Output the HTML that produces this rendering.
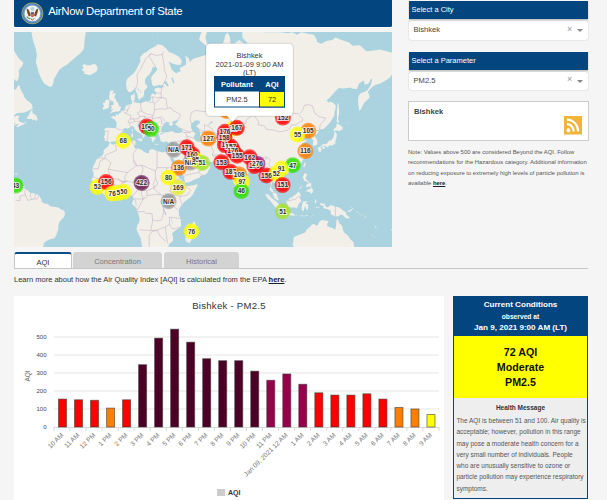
<!DOCTYPE html>
<html><head><meta charset="utf-8">
<style>
*{box-sizing:border-box;margin:0;padding:0}
html,body{width:607px;height:500px;overflow:hidden;background:#f5f5f5;font-family:"Liberation Sans",sans-serif;color:#333}
.abs{position:absolute}
#hdr{left:14px;top:0;width:378px;height:26.5px;background:#03467f;border-radius:0 0 1.5px 1.5px;box-shadow:0 1px 0 #fff}
#hdr .t{position:absolute;left:34.3px;top:5.3px;color:#fff;font-size:11.4px;letter-spacing:-0.3px;white-space:nowrap}
#map{left:14px;top:32px;width:378px;height:215px;background:#aad3df;overflow:hidden}
.ph{left:409px;width:179px;height:18px;background:#03467f;color:#fff;font-size:7.5px;padding:3.5px 0 0 2.5px;white-space:nowrap;box-shadow:0 1px 1.5px rgba(0,0,0,.25)}
.sel{left:409px;width:179px;height:18.5px;background:#fff;border-radius:2px;box-shadow:0 0 1.2px rgba(0,0,0,.35);font-size:7.6px;color:#444;padding:4px 0 0 4.5px}
.sel .x{position:absolute;left:158px;top:2.5px;font-size:9px;color:#999}
.sel .c{position:absolute;left:168px;top:8px;width:0;height:0;border-left:3px solid transparent;border-right:3px solid transparent;border-top:3px solid #888}
#rss{left:408px;top:101px;width:181px;height:40px;background:#fff;border:1px solid #ccc}
#rss .n{position:absolute;left:5px;top:5px;font-size:7.6px;font-weight:bold;color:#444}
#note{left:408px;top:147px;width:190px;white-space:nowrap;font-size:5.9px;line-height:10.3px;color:#555}
.tab{top:252px;height:16px;background:#d3d3d3;font-size:7.5px;color:#777;text-align:center;padding-top:4.5px;border-radius:3px 3px 0 0}
#learn{left:14px;top:274.5px;font-size:7.5px;color:#333;white-space:nowrap}
#chart{left:14px;top:296px;width:430px;height:204px;background:#fff}
#cc{left:453px;top:296px;width:135px;height:203px;border:1px solid #03467f;background:#eee}
</style></head><body>
<div id="hdr" class="abs">
 <svg class="abs" style="left:7px;top:1.5px" width="23" height="23" viewBox="0 0 23 23">
  <circle cx="11.4" cy="11.4" r="10.9" fill="#a9a86a"/>
  <circle cx="11.4" cy="11.4" r="10.1" fill="#4a7fb8"/>
  <circle cx="11.4" cy="11.4" r="9.2" fill="#6d98c8"/>
  <circle cx="11.4" cy="11.4" r="7.9" fill="#f2f2ee"/>
  <circle cx="11.4" cy="7" r="2.1" fill="#b5d3e3"/>
  <path d="M5.5 6.5 Q6 11 7.8 14.5 L9.8 13.5 Q9 10 7.5 7.5Z M17.3 6.5 Q16.8 11 15 14.5 L13 13.5 Q13.8 10 15.3 7.5Z" fill="#6e4c22"/>
  <path d="M9.9 10.3 H12.9 V14.2 Q11.4 16.5 9.9 14.2Z" fill="#d06060"/>
  <rect x="9.9" y="10.3" width="3" height="1.4" fill="#3a5a9a"/>
  <path d="M5.8 14.5 Q7 16.5 9 16.8" stroke="#5a8a4a" stroke-width="1.1" fill="none"/>
  <path d="M9.5 16.5 L11.4 18 L13.3 16.5" stroke="#6e4c22" stroke-width="0.9" fill="none"/>
 </svg>
 <div class="t">AirNow Department of State</div>
</div>
<div id="map" class="abs"><svg class="abs" style="left:0;top:0" width="378" height="215" viewBox="0 0 378 215">
<path d="M95.5 111.3L94.0 114.7L92.8 115.5L90.1 117.8L89.4 119.3L89.7 121.3L88.3 123.7L84.6 125.5L82.1 128.1L80.8 131.5L80.0 132.8L78.4 136.5L78.1 137.5L79.2 139.8L79.8 142.1L79.2 144.7L77.5 147.5L78.9 149.6L78.8 151.3L80.4 152.0L81.5 153.7L83.4 155.7L84.1 157.3L85.2 158.8L87.8 160.7L90.1 162.4L92.6 163.6L96.0 162.7L98.3 162.2L101.4 162.9L104.1 161.8L106.3 161.0L109.7 160.5L111.8 161.2L113.7 163.8L116.0 163.5L117.2 163.2L119.2 164.5L119.5 167.0L119.1 168.9L118.9 169.8L117.8 171.3L119.8 174.1L121.7 176.3L122.6 177.8L123.4 179.6L124.3 182.0L124.8 184.0L125.7 187.1L125.1 189.9L123.1 194.1L122.5 197.4L124.5 201.8L126.8 206.6L127.4 211.0L127.7 212.9L129.8 217.1L132.9 226.1L135.2 229.8L150.6 229.8L152.1 218.6L154.1 216.2L155.1 211.9L158.6 209.3L159.1 208.3L159.1 205.1L158.3 202.6L158.0 201.5L160.3 199.4L161.2 198.4L165.8 195.7L167.1 193.7L166.9 190.6L166.8 187.0L165.1 183.5L164.9 180.9L164.5 178.4L165.5 176.6L166.9 174.2L168.9 171.9L170.6 169.6L174.1 167.3L177.5 164.2L179.1 162.2L181.1 158.1L183.2 154.2L183.4 152.1L180.6 152.9L173.7 154.3L171.4 153.2L170.8 152.4L171.1 150.9L170.1 150.2L167.5 147.8L165.1 146.1L163.8 143.0L162.1 141.4L161.7 139.6L161.1 135.7L159.1 132.5L157.7 129.8L156.5 126.9L155.4 124.6L154.5 122.0L154.9 123.7L157.2 125.7L158.3 122.9L158.6 125.5L159.4 126.7L161.1 129.8L162.9 132.2L164.8 136.5L167.2 140.6L169.8 144.0L170.5 147.4L171.0 149.7L171.4 150.7L173.7 150.5L177.5 149.3L180.0 147.8L184.8 146.1L187.7 143.8L191.2 142.4L193.4 140.8L194.6 138.2L196.5 134.9L194.6 133.0L191.7 131.7L191.2 128.3L190.6 129.6L189.5 130.1L187.5 132.0L185.2 132.3L183.7 131.3L183.8 129.1L183.2 128.8L182.6 131.3L181.4 129.3L180.8 127.4L179.5 126.2L178.3 123.0L179.2 122.2L180.6 121.4L182.3 123.4L183.5 125.5L186.8 127.6L189.8 127.2L191.1 126.9L192.5 128.1L193.4 129.6L196.0 130.0L197.7 130.1L200.3 130.5L203.7 130.1L206.8 130.0L207.5 131.0L208.5 132.7L210.0 134.4L212.2 134.9L211.4 137.3L212.9 137.7L216.0 136.5L216.2 135.4L216.3 137.2L216.5 140.6L217.2 143.8L218.0 146.3L219.5 150.4L221.1 153.4L221.7 155.1L223.7 157.9L224.8 156.8L226.0 155.7L227.2 154.5L227.2 152.6L228.0 150.1L227.7 148.0L228.9 145.8L229.5 145.1L231.1 143.8L232.6 142.7L234.3 141.1L236.5 139.3L238.2 137.7L239.8 136.3L242.2 135.7L243.8 135.4L245.1 134.4L245.7 135.2L246.0 136.7L247.4 138.8L248.8 140.6L249.8 143.0L250.0 145.5L251.1 145.6L252.6 144.7L254.2 144.0L254.8 145.5L255.5 148.5L256.5 151.8L256.0 154.9L255.7 158.1L258.5 160.4L258.8 162.1L260.3 165.8L261.7 167.0L263.7 168.2L264.8 168.4L264.2 166.6L263.4 164.5L262.8 161.9L261.8 161.0L259.2 159.3L258.6 157.3L257.2 156.2L257.1 154.2L258.2 151.0L258.3 149.6L259.2 149.4L259.7 150.4L260.6 150.9L262.2 151.5L262.9 153.1L263.7 154.2L265.1 154.3L265.7 156.0L265.7 157.1L267.2 155.7L268.6 154.9L269.2 154.3L271.4 153.4L272.2 152.6L272.5 151.5L272.5 149.0L272.0 146.6L270.9 145.3L270.0 144.7L268.2 142.9L267.1 141.1L267.2 139.6L268.3 138.5L269.5 137.3L271.1 136.5L272.3 136.5L273.2 137.3L274.0 138.5L274.3 137.0L276.0 136.5L277.5 136.0L280.2 135.2L282.2 134.4L284.0 133.4L286.2 131.5L288.0 130.1L288.5 128.8L289.4 127.2L290.5 125.5L291.7 123.7L292.0 122.2L291.4 120.5L292.0 119.8L290.6 118.4L290.3 117.5L289.5 115.6L288.2 113.4L288.5 111.9L289.7 110.8L291.9 109.2L293.1 108.3L291.2 108.1L288.8 108.7L287.5 108.3L286.0 106.5L285.5 105.1L286.8 104.1L288.5 103.3L290.0 101.9L291.4 101.3L292.5 102.7L291.5 104.5L291.1 105.3L292.9 104.1L295.9 103.3L296.6 103.9L296.9 105.7L298.6 107.7L299.2 108.1L299.1 110.2L298.8 112.8L299.4 114.0L300.9 113.4L302.9 112.7L303.5 111.0L303.1 108.1L301.9 105.9L300.6 104.7L300.8 103.3L303.5 101.7L304.2 99.5L305.4 98.2L307.4 96.8L308.9 97.4L310.6 96.3L313.1 93.8L316.0 90.5L318.0 87.6L320.3 83.7L320.6 80.1L321.4 76.9L321.7 74.1L321.4 73.1L320.3 72.1L318.6 70.5L316.0 69.7L314.9 70.8L312.6 68.6L316.9 64.5L320.9 59.7L324.8 56.1L329.1 56.4L333.5 56.1L336.5 55.5L338.8 56.7L342.9 57.0L345.2 51.2L349.9 48.6L350.6 52.4L354.2 52.1L356.8 47.3L358.3 46.6L356.8 52.7L355.7 54.9L352.9 58.8L346.0 61.7L344.5 64.5L343.9 68.6L344.6 74.4L345.4 78.9L346.8 77.6L348.5 73.9L350.6 70.2L353.4 67.8L355.7 65.4L354.9 61.7L353.7 60.3L355.7 57.3L359.1 54.3L361.4 53.1L366.8 51.2L370.6 48.9L375.2 46.3L379.6 40.5L377.6 38.7L381.4 37.6L381.4 21.8L389.1 17.4L389.1 -44.4L142.9 -44.4L144.1 12.3L140.6 14.7L135.2 17.4L133.5 19.2L129.1 21.8L126.0 25.2L126.6 28.8L124.1 33.9L122.3 37.6L119.1 41.9L116.8 43.6L113.8 46.3L112.1 49.6L112.1 53.1L112.8 56.4L113.1 57.6L114.5 59.7L115.2 60.3L117.5 59.7L119.1 57.9L120.3 57.3L120.9 54.6L121.5 56.7L121.7 59.1L122.8 61.1L123.8 64.0L124.0 65.9L124.5 67.6L126.3 67.6L126.6 65.9L128.5 65.4L129.7 64.0L130.0 61.4L130.3 58.8L132.3 56.4L133.7 54.6L131.4 52.1L130.9 49.6L131.4 46.6L133.1 44.6L135.7 41.9L137.2 39.4L138.5 35.4L141.7 34.6L143.5 37.6L141.1 40.5L137.7 44.3L137.1 47.0L137.7 49.6L138.3 52.9L139.5 54.3L142.8 53.7L145.2 52.7L148.6 53.7L150.9 54.6L148.3 55.2L147.5 56.1L143.7 55.8L142.5 56.1L140.6 56.7L140.6 58.2L140.9 59.4L141.8 59.4L142.0 62.3L141.4 63.1L139.2 61.4L137.7 61.7L136.8 64.5L136.9 66.7L136.8 68.1L135.2 68.9L133.2 70.2L132.6 69.2L130.3 69.7L128.5 70.8L126.5 71.6L124.3 70.8L123.1 71.0L121.4 70.2L120.0 70.5L119.8 69.2L120.8 67.3L120.3 65.4L121.2 64.5L120.5 63.1L120.8 61.1L118.9 62.9L117.7 62.9L116.9 64.5L116.9 67.3L117.7 68.6L118.0 71.3L116.9 72.6L115.4 72.3L114.5 72.9L112.6 73.4L111.8 74.0L111.4 75.4L111.1 76.2L110.6 76.7L109.8 77.9L108.3 78.6L107.3 79.0L106.8 80.8L105.2 81.5L104.6 82.5L103.2 83.0L102.4 82.0L101.5 82.3L102.1 84.4L101.4 84.6L99.8 84.1L98.0 84.4L97.1 85.1L97.5 86.0L98.8 86.4L100.6 87.6L101.4 88.9L102.7 90.2L102.6 91.6L102.6 93.8L102.1 95.9L100.1 96.1L98.6 96.0L95.7 95.8L92.9 95.7L91.5 96.2L90.1 97.2L90.9 98.6L91.1 100.8L90.8 103.1L89.8 105.7L90.9 106.3L90.8 109.0L92.3 109.0L93.7 108.7L94.8 110.0L96.0 110.8Z" fill="#f2efe9"/>
<path d="M12.1 -14.5L17.5 0.2L18.1 3.9L19.4 9.9L21.1 14.7L22.1 18.3L22.9 23.1L21.8 30.4L23.5 35.4L24.6 40.5L26.3 44.6L28.0 47.9L30.3 51.8L34.4 54.0L36.9 54.9L38.3 53.4L39.2 51.2L39.8 47.3L42.4 42.9L45.1 38.3L48.1 35.4L52.9 32.7L57.5 28.8L62.1 24.8L65.2 22.2L68.3 19.2L69.8 16.5L70.3 13.7L70.6 7.9L71.4 1.8L75.2 -14.5Z" fill="#f2efe9"/>
<path d="M69.5 41.9L70.9 40.1L67.7 38.0L69.8 35.8L68.1 33.9L70.0 32.0L73.7 33.5L76.8 33.1L79.8 32.0L82.0 32.4L83.5 35.4L83.1 38.7L80.8 40.5L77.5 42.6L75.2 43.2L72.1 41.9Z" fill="#f2efe9"/>
<path d="M-18.6 -14.5L-14.0 0.2L-10.2 4.9L-5.6 10.4L-0.9 15.1L0.4 19.2L2.9 23.5L5.2 26.8L9.4 30.8L8.3 33.9L6.0 36.5L4.7 39.4L5.2 42.6L4.7 45.0L4.4 47.0L3.5 48.6L2.1 49.2L0.6 47.3L-2.5 46.6L-6.3 47.9L-18.6 47.9Z" fill="#f2efe9"/>
<path d="M5.1 53.1L6.4 56.7L7.8 59.7L9.5 62.6L10.3 65.1L12.4 67.8L15.4 70.0L17.8 72.3L18.7 75.7L17.1 77.6L12.9 79.6L9.7 80.8L6.7 80.8L2.6 81.3L0.4 83.2L-1.7 84.1L-3.3 86.0L4.0 83.4L5.7 84.1L4.4 86.0L4.4 87.1L4.7 88.7L6.3 90.1L9.1 90.7L10.6 91.4L11.8 89.6L11.4 88.3L12.4 90.5L10.6 92.0L7.2 93.6L3.5 95.3L2.6 95.3L3.2 93.6L5.5 92.0L2.6 92.3L1.4 93.1L-0.9 94.2L-3.3 95.7L-10.9 103.1L-34.0 103.1L-34.0 47.9L-15.6 47.9L-4.0 49.6L-2.5 52.7L-2.0 58.2L2.1 57.3L4.0 53.7Z" fill="#f2efe9"/>
<path d="M19.1 77.4L18.1 79.4L19.1 81.5L21.1 82.5L22.1 83.4L22.9 85.1L23.5 86.9L22.8 88.9L21.4 88.3L20.0 87.6L18.4 88.5L18.0 86.9L13.2 86.9L13.4 84.8L14.9 83.2L16.1 80.1L17.7 77.9Z" fill="#f2efe9"/>
<path d="M-6.3 151.8L-0.9 154.0L2.1 154.2L4.4 154.6L6.7 154.0L9.1 153.8L8.3 154.9L10.6 156.5L12.4 157.4L14.3 158.7L15.1 159.9L16.6 161.2L19.5 161.3L21.7 161.9L24.0 162.9L25.4 164.1L26.6 166.6L27.7 167.8L27.4 169.5L29.1 170.7L30.1 171.2L31.4 171.9L32.9 171.6L34.4 172.4L36.3 174.2L39.1 174.7L42.1 174.9L45.2 176.1L47.5 177.8L50.0 178.4L50.8 180.4L50.8 182.9L49.7 185.4L47.5 187.4L45.2 190.6L44.4 193.4L44.3 197.3L43.4 199.9L42.6 202.3L41.4 204.8L39.8 206.6L37.5 206.8L34.4 208.1L32.4 209.0L29.8 211.0L29.7 213.6L26.8 218.8L-3.3 237.7L-18.6 151.8Z" fill="#f2efe9"/>
<path d="M10.6 153.7L10.7 154.8L9.2 154.9L9.4 153.8Z" fill="#f2efe9"/>
<path d="M0.9 141.4L3.5 141.6L3.4 142.4L0.9 142.2Z" fill="#f2efe9"/>
<path d="M95.7 81.1L96.4 81.3L98.1 80.5L99.8 79.9L100.7 80.0L102.1 79.5L104.2 79.4L106.5 78.6L106.6 77.9L105.7 77.6L106.5 76.7L107.1 75.2L105.8 74.0L104.9 74.4L104.8 72.6L104.3 71.0L102.8 69.7L102.3 68.6L101.5 66.7L100.4 65.9L100.4 64.5L101.4 62.7L101.7 61.1L99.5 61.4L98.3 61.4L99.8 59.0L99.2 58.4L96.8 58.5L95.5 61.1L95.5 63.1L94.9 64.8L95.5 67.8L96.8 68.6L97.8 69.2L99.1 68.9L99.4 70.5L99.8 72.9L97.4 73.1L97.1 74.4L98.0 75.7L96.4 77.2L98.3 77.4L99.5 77.6L98.0 78.4L97.1 79.9Z" fill="#f2efe9"/>
<path d="M93.1 67.6L94.9 68.1L95.8 69.7L95.1 71.3L95.1 73.0L94.7 75.9L91.7 76.9L89.4 77.8L88.4 76.2L89.5 74.9L90.1 73.4L88.8 72.6L89.1 70.8L91.2 70.5L90.9 69.6L91.7 68.1Z" fill="#f2efe9"/>
<path d="M142.9 -44.4L144.1 12.3L148.3 13.3L152.1 16.5L154.5 19.6L156.0 20.5L159.8 21.8L163.7 23.9L165.7 25.6L167.8 29.2L166.8 32.7L163.7 33.1L158.3 31.6L154.5 29.6L156.0 32.7L157.7 37.6L159.8 39.4L162.1 41.2L166.8 39.0L165.7 36.5L166.8 35.4L169.8 33.9L172.1 32.4L172.1 28.0L171.1 23.5L174.5 26.0L176.0 30.0L179.1 26.8L186.0 24.8L188.3 23.9L192.9 22.7L195.2 21.8L197.5 18.3L203.7 22.7L206.8 22.7L208.3 19.6L207.5 15.1L210.2 7.9L211.4 2.8L213.7 0.2L216.0 5.4L216.5 12.8L217.5 21.8L216.0 30.0L215.2 32.0L218.3 31.2L221.4 23.9L219.1 21.8L218.3 15.1L221.4 10.4L225.2 7.9L228.3 10.4L230.6 11.8L232.9 17.4L232.2 19.6L234.5 17.4L232.9 10.4L228.3 5.4L228.3 0.2L236.8 -1.5L250.6 0.2L266.0 0.2L273.7 1.2L278.3 0.2L282.9 2.8L287.5 0.2L293.7 1.8L299.9 2.8L302.9 7.9L302.9 9.9L307.5 11.8L312.2 8.9L318.3 7.9L321.4 5.4L327.5 7.9L335.2 10.4L338.3 13.7L346.0 13.3L352.2 19.2L358.3 18.7L366.0 17.4L373.7 19.6L381.4 21.8L396.8 21.8L396.8 -105.7L142.9 -105.7Z" fill="#aad3df"/>
<path d="M96.2 110.8L97.7 109.6L101.1 109.6L102.9 107.9L103.7 106.5L103.9 104.1L105.8 101.7L107.8 100.3L109.5 98.4L109.1 97.6L110.5 95.9L112.8 96.3L113.5 96.8L115.7 95.5L118.1 94.0L119.5 94.6L120.3 95.8L120.6 97.2L123.4 99.7L126.4 101.5L127.2 101.9L128.8 103.5L128.5 106.9L130.0 105.3L130.8 104.3L130.9 102.3L132.9 102.9L130.5 100.9L129.4 99.3L126.3 98.0L125.2 95.7L123.8 94.7L123.4 91.8L125.6 91.3L125.8 93.1L126.6 92.0L127.8 94.6L129.7 95.9L132.3 97.7L133.8 99.1L134.4 100.5L134.5 102.2L135.1 103.9L136.9 106.3L137.8 106.6L137.7 109.0L139.1 110.2L139.9 109.6L139.8 108.1L140.9 107.3L141.4 107.8L141.7 106.1L139.8 104.5L139.7 101.9L141.2 103.1L144.3 101.4L145.1 102.7L145.2 104.1L146.1 106.3L146.6 109.0L148.0 109.4L149.8 110.4L151.7 109.2L153.7 110.0L154.9 111.0L157.7 109.4L160.1 109.8L159.5 111.9L159.1 114.9L158.3 116.9L158.0 118.2L157.5 119.3L154.1 119.7L150.5 119.8L148.9 120.5L143.2 119.1L141.4 118.2L138.3 116.9L135.4 118.2L134.5 121.4L132.6 120.9L130.0 119.8L127.7 117.7L124.8 116.7L122.1 116.2L120.0 114.9L121.1 113.4L121.4 111.5L121.4 108.8L119.7 108.5L116.5 109.2L113.7 109.0L109.1 109.5L106.8 110.4L103.5 111.5L100.0 112.5L97.8 112.3L96.3 111.1Z" fill="#aad3df"/>
<path d="M145.1 102.7L146.8 101.3L148.9 101.1L149.8 101.7L147.5 102.3Z" fill="#aad3df"/>
<path d="M149.2 100.7L153.4 100.2L158.5 99.1L160.3 100.5L162.9 100.9L165.5 101.1L168.5 99.8L168.3 98.0L165.5 95.7L162.6 93.3L160.8 92.3L162.9 90.5L164.5 87.8L159.1 89.2L158.3 90.5L159.1 92.0L159.1 92.7L156.3 94.0L154.5 92.0L156.1 90.7L151.8 89.4L150.1 92.3L148.6 94.2L147.4 96.6L146.8 98.0L147.5 99.3Z" fill="#aad3df"/>
<path d="M179.1 90.5L180.6 88.7L183.7 88.3L186.0 89.4L185.7 91.6L182.1 93.8L183.2 94.9L185.4 97.2L185.7 100.1L187.2 100.1L186.0 101.9L186.0 103.1L186.8 104.7L187.5 107.1L187.4 109.4L184.5 109.8L181.4 108.5L179.7 106.3L180.1 104.1L181.2 102.3L181.8 102.1L180.3 100.5L178.8 99.1L177.5 97.0L176.8 93.8L177.5 91.6Z" fill="#aad3df"/>
<path d="M196.8 89.8L198.3 89.2L198.3 90.7L196.0 92.0L194.2 94.0L194.6 92.5Z" fill="#aad3df"/>
<path d="M217.5 90.5L219.8 88.9L223.7 89.6L226.0 88.7L226.3 90.3L221.4 90.7L219.1 91.2Z" fill="#aad3df"/>
<path d="M272.9 66.5L271.4 72.6L268.0 76.4L264.5 77.6L264.2 76.9L268.3 73.9L271.8 68.6Z" fill="#aad3df"/>
<path d="M154.5 169.9L156.8 170.6L156.0 174.2L154.5 175.0L153.4 172.7Z" fill="#aad3df"/>
<path d="M149.4 175.5L151.8 183.5L152.1 182.7L149.8 175.6Z" fill="#aad3df"/>
<path d="M156.8 185.1L158.6 192.6L158.9 192.2L157.2 185.2Z" fill="#aad3df"/>
<path d="M152.1 48.9L154.9 53.7L152.9 54.3L149.8 50.5Z" fill="#aad3df"/>
<path d="M158.3 45.0L160.6 50.5L159.1 51.2L157.5 46.3Z" fill="#aad3df"/>
<path d="M123.7 56.1L125.7 58.2L124.0 58.8Z" fill="#aad3df"/>
<path d="M126.9 57.9L126.9 60.9L126.5 60.9L126.5 57.9Z" fill="#aad3df"/>
<path d="M193.1 14.7L189.8 11.8L185.2 7.9L186.0 3.9L187.5 0.2L189.8 -5.4L194.5 -5.4L192.9 0.2L191.4 5.4L192.9 10.9L195.2 13.7Z" fill="#f2efe9"/>
<path d="M194.5 17.4L195.2 15.6L197.5 16.5L197.4 18.3Z" fill="#f2efe9"/>
<path d="M123.7 106.5L128.5 106.7L127.8 109.0L127.7 109.6L123.5 107.9Z" fill="#f2efe9"/>
<path d="M118.6 100.7L119.2 104.9L117.5 105.3L117.1 102.1Z" fill="#f2efe9"/>
<path d="M118.9 97.0L118.6 100.3L117.7 99.3L117.7 97.8Z" fill="#f2efe9"/>
<path d="M140.6 111.7L144.9 112.3L144.1 112.8L140.6 112.5Z" fill="#f2efe9"/>
<path d="M154.1 112.1L157.7 111.7L155.2 113.6L154.3 113.4Z" fill="#f2efe9"/>
<path d="M227.8 155.2L229.5 157.3L230.5 159.6L229.1 161.2L228.2 161.3L227.2 159.3L227.4 157.3Z" fill="#f2efe9"/>
<path d="M180.3 189.0L181.4 191.4L182.1 194.5L180.6 197.0L179.4 201.8L177.7 206.8L176.0 211.0L172.5 210.1L171.2 206.8L172.0 203.5L172.3 198.6L173.1 195.3L176.0 194.5L178.3 191.8Z" fill="#f2efe9"/>
<path d="M251.1 161.8L254.5 162.4L256.2 164.5L259.1 167.3L261.7 168.9L264.0 171.2L265.7 173.5L267.5 175.0L267.2 179.5L264.5 178.1L261.8 175.8L258.9 172.2L256.5 168.9L253.7 166.6L252.2 164.2Z" fill="#f2efe9"/>
<path d="M267.5 179.5L271.1 180.0L274.3 181.0L278.0 181.0L280.6 182.3L280.6 183.7L276.0 183.2L271.4 182.3L268.3 181.2L266.5 180.9Z" fill="#f2efe9"/>
<path d="M281.4 182.9L282.2 184.0L284.5 184.1L287.5 183.5L290.6 183.7L293.7 183.1L293.7 183.7L289.9 184.3L286.0 184.1L283.4 184.1Z" fill="#f2efe9"/>
<path d="M300.3 183.2L296.8 184.8L294.5 186.3L295.7 185.6L298.0 183.7Z" fill="#f2efe9"/>
<path d="M284.2 159.6L286.2 161.5L286.9 163.9L285.4 165.3L287.5 168.9L284.3 172.4L283.7 174.2L282.9 176.6L280.8 175.6L276.8 175.5L274.0 175.0L273.7 172.7L272.5 170.4L272.8 167.9L274.3 167.9L275.7 166.1L278.3 165.2L279.9 163.6L281.4 162.7L283.1 161.2Z" fill="#f2efe9"/>
<path d="M297.1 167.9L295.2 169.6L289.9 169.2L289.1 169.6L288.3 171.9L287.4 175.8L288.3 179.0L289.7 178.7L290.6 175.0L290.9 174.2L292.5 177.3L292.9 178.9L294.0 176.6L294.2 171.9L291.9 171.8L291.4 171.2L293.7 169.6L296.5 168.9Z" fill="#f2efe9"/>
<path d="M301.4 167.0L302.6 169.6L301.4 171.6L300.6 170.4Z" fill="#f2efe9"/>
<path d="M301.4 174.7L305.7 175.2L305.2 175.8L301.7 175.6Z" fill="#f2efe9"/>
<path d="M305.9 171.0L308.3 171.6L310.6 171.8L311.4 173.9L312.9 175.5L316.0 173.9L316.6 172.7L320.6 174.4L323.7 175.0L326.8 176.6L328.8 178.4L331.4 180.1L332.0 180.7L332.2 182.7L334.5 184.3L336.0 186.6L332.2 186.2L330.6 185.1L329.1 183.2L326.0 182.4L324.9 184.3L321.4 184.5L317.5 182.7L316.8 181.8L316.5 178.4L313.7 177.3L310.6 176.6L309.1 175.8L309.9 173.9L307.5 173.5L306.3 172.7Z" fill="#f2efe9"/>
<path d="M338.0 176.9L338.3 178.1L335.2 180.0L332.9 179.2L335.2 178.6Z" fill="#f2efe9"/>
<path d="M323.7 187.0L322.3 189.0L322.2 191.8L322.0 194.5L321.1 197.8L318.6 196.1L315.2 195.0L312.9 193.7L313.7 190.6L314.9 189.0L312.2 188.8L309.9 188.2L307.5 187.9L306.0 189.2L305.7 189.6L304.6 190.9L303.7 193.4L301.7 193.6L300.6 192.2L299.1 192.0L297.5 193.0L296.0 195.0L293.7 196.5L292.5 197.8L291.4 200.2L288.3 201.8L286.9 202.3L284.5 203.1L280.6 204.8L280.0 204.8L279.5 206.8L279.2 210.0L278.6 212.7L280.0 215.3L281.4 228.0L335.2 228.0L340.8 216.2L340.3 214.4L339.4 210.1L336.6 207.4L334.9 205.1L334.0 203.5L330.3 200.7L329.1 198.6L328.8 196.8L328.0 193.7L326.8 192.6L325.4 191.4L324.6 189.0Z" fill="#f2efe9"/>
<path d="M290.3 141.4L292.5 141.6L292.9 143.8L291.5 145.8L292.5 148.3L295.4 149.9L295.2 150.9L291.1 149.0L290.0 148.8L289.9 147.7L288.8 145.6L289.7 143.0Z" fill="#f2efe9"/>
<path d="M297.5 155.2L299.1 158.1L298.6 160.7L297.2 161.8L295.2 159.8L292.2 159.6L292.9 157.9L294.9 157.3L296.5 156.5Z" fill="#f2efe9"/>
<path d="M297.2 151.0L297.1 154.9L293.7 154.5L292.9 156.0L292.0 153.4L293.4 152.1L295.2 151.2Z" fill="#f2efe9"/>
<path d="M288.3 152.6L287.9 154.9L284.8 157.4L284.6 157.0L287.5 154.2Z" fill="#f2efe9"/>
<path d="M291.4 130.1L291.5 132.3L290.3 135.7L289.2 134.0L290.2 131.5Z" fill="#f2efe9"/>
<path d="M274.2 138.8L275.2 139.8L272.9 141.9L271.5 140.1Z" fill="#f2efe9"/>
<path d="M306.0 114.9L307.5 116.9L306.5 120.2L304.8 119.6L304.2 117.3L304.0 115.6Z" fill="#f2efe9"/>
<path d="M306.0 114.7L308.5 112.7L309.4 111.9L312.9 111.7L313.7 110.4L315.5 108.1L316.0 109.0L318.3 107.3L319.9 104.1L320.3 100.7L322.0 100.1L322.9 103.1L322.2 106.5L321.4 109.0L321.2 111.5L319.7 112.8L318.0 113.6L315.2 113.4L313.4 115.7L312.3 114.2L310.6 113.4L309.1 114.2L306.8 114.9Z" fill="#f2efe9"/>
<path d="M311.5 114.3L310.9 116.0L308.9 116.9L307.9 115.6L309.1 114.7Z" fill="#f2efe9"/>
<path d="M320.0 100.3L321.2 98.4L322.6 98.2L324.9 99.3L328.8 97.0L328.0 94.2L322.8 91.6L322.3 94.9L320.3 96.6L319.5 98.0Z" fill="#f2efe9"/>
<path d="M324.2 70.8L324.8 73.9L325.2 81.3L324.0 86.0L325.1 90.5L322.9 90.5L322.9 84.8L322.9 78.9L323.4 72.6Z" fill="#f2efe9"/>
<path d="M328.3 95.9L331.4 92.7L332.2 92.0L336.0 89.4L336.8 88.9L335.9 89.8L331.1 93.1L328.6 96.1Z" fill="#f2efe9"/>
<path d="M336.2 174.2L337.5 175.0L339.7 177.0L339.2 177.5L337.5 175.6L336.0 174.6Z" fill="#f2efe9"/>
<path d="M342.3 178.7L344.2 180.4L343.9 181.0L342.3 179.3Z" fill="#f2efe9"/>
<path d="M350.0 184.8L351.9 185.1L351.4 185.7L350.2 185.2Z" fill="#f2efe9"/>
<path d="M351.5 183.4L352.8 185.2L352.5 185.6L351.5 183.8Z" fill="#f2efe9"/>
<path d="M345.1 181.2L346.9 183.1L346.5 183.4L344.9 181.5Z" fill="#f2efe9"/>
<path d="M347.5 182.0L350.0 183.2L349.7 183.5L347.4 182.3Z" fill="#f2efe9"/>
<path d="M360.8 193.4L361.7 194.7L362.6 196.3L362.2 196.5L360.8 194.4Z" fill="#f2efe9"/>
<path d="M356.8 202.0L359.2 204.1L361.2 205.8L360.6 205.6L357.2 202.8Z" fill="#f2efe9"/>
<path d="M377.2 197.4L379.1 197.9L379.1 198.9L377.1 198.6Z" fill="#f2efe9"/>
<path d="M379.7 195.7L381.2 196.5L380.6 196.8L379.6 196.1Z" fill="#f2efe9"/>
<path d="M177.5 91.6L176.0 87.1L176.5 84.8L177.2 80.6L182.1 78.4L188.3 79.4L194.5 79.9L198.3 78.9L198.3 75.2L198.8 71.3L204.5 70.5L210.6 68.1L217.2 71.3L221.8 73.1L227.5 78.9L232.6 79.4L238.8 83.2M238.8 83.2L242.9 80.3L249.8 80.3L254.5 81.3L255.7 78.1L262.2 80.6L268.3 80.8L271.4 82.5L277.5 81.5L284.0 81.5M239.5 83.2L241.4 85.3L244.5 89.4L244.2 92.7L250.6 94.0L252.6 97.4L259.8 98.0L265.2 99.9L269.1 99.3L273.7 98.0L276.2 95.7L277.5 92.7L281.4 93.1L285.2 90.5L288.8 88.7L288.6 86.7L284.0 81.5M285.9 81.5L288.3 78.9L290.6 73.1L294.5 72.6L298.3 73.9L300.8 81.3L305.4 84.8L311.4 86.0L310.6 87.8L306.3 92.7L305.4 98.0M305.4 98.0L301.4 99.1L299.1 100.3L295.9 103.3M238.8 83.2L232.5 87.8L231.1 92.0L227.5 92.7L228.2 97.0L226.8 99.1L223.7 101.1L219.7 102.3L217.8 104.5L219.7 108.1L220.6 109.4L224.2 111.7L226.8 117.3L229.4 121.3L234.5 124.4L240.2 125.7L242.2 126.7L246.0 125.7L252.9 125.1L256.3 128.1L254.6 132.2L257.2 135.5L260.6 136.5L263.2 134.9L267.4 134.7L270.5 136.5M185.4 97.2L190.6 100.1L190.6 92.7L194.5 94.2L198.3 97.0L199.8 100.7L206.0 102.1L207.2 100.7L206.0 99.1L209.1 101.1L212.9 101.5L213.5 98.6L218.3 97.0L222.9 97.4L228.2 97.0M187.2 100.1L190.6 100.7L199.8 100.7L205.7 106.1L206.8 108.5L203.7 109.0L198.6 111.7L196.0 109.0L192.5 107.1L187.5 108.5L187.5 107.1M212.9 101.5L211.4 103.1L213.2 104.1L217.8 104.3M206.8 108.5L209.1 108.5L212.2 109.0L214.5 108.1L219.7 109.0M219.7 109.0L214.5 110.0L214.0 112.8L212.2 115.3L210.6 119.1L207.5 120.2L206.5 122.9L198.3 123.0L199.5 119.5L197.5 114.7L198.6 111.7M198.3 123.0L201.7 126.4L199.5 128.9L199.2 130.3M224.2 111.7L219.1 113.8L219.2 117.5L218.0 121.3L212.9 125.5L213.7 131.5L209.4 132.8M229.4 121.3L228.0 124.3L238.3 128.3L240.2 127.6L246.0 127.6M240.2 127.6L241.4 130.3L240.0 131.5L241.2 134.5L241.5 135.7M241.4 130.3L242.8 128.6L246.5 130.7L245.2 133.2L246.8 134.2L246.9 137.0M252.9 125.1L252.2 126.7L250.2 129.8L248.3 133.2L247.8 135.7L246.9 137.0M260.6 136.5L258.5 138.5L256.8 138.3L254.5 142.2L256.2 145.1L257.1 148.6L256.9 151.8L256.2 154.9M258.5 138.5L259.8 142.2L264.5 142.6L266.8 147.8L263.7 148.2L262.0 149.4L262.6 152.1M267.4 134.7L264.5 139.8L268.3 143.8L269.8 147.8L270.0 151.8L265.2 154.0M266.8 147.8L269.8 147.8M258.5 160.4L260.6 160.8L261.5 161.0M285.7 163.9L281.1 167.3L273.7 168.9L273.1 167.9M321.4 174.4L321.4 184.5M171.4 100.1L172.9 104.1L173.4 108.5L175.2 112.3L175.5 116.6L177.7 119.3L179.1 122.0M160.1 109.6L163.7 109.4L169.5 108.8L168.0 111.0L167.4 115.8L164.8 117.8L161.4 119.3L159.8 123.4L158.1 122.9M169.5 108.8L173.4 108.5M167.4 115.8L164.5 118.4L173.2 123.6L176.0 123.6L178.9 124.6M170.3 144.8L172.1 143.0L184.5 140.6L189.1 143.8L186.1 144.5M184.5 140.6L189.4 134.5L183.8 132.3M189.4 134.5L190.6 132.3L190.9 129.3M159.2 117.5L161.1 117.1L164.1 116.0L160.8 114.0L159.8 113.6M168.3 99.9L171.4 100.7L171.4 100.1L176.0 100.7L176.5 99.5L179.1 99.5M166.0 96.1L170.6 98.0L174.0 99.1L176.0 100.7M172.9 104.1L176.0 105.1L178.3 105.5L179.7 106.3M143.1 118.9L142.9 135.7L141.4 139.0L141.4 139.8L141.4 146.3L139.1 152.6L140.6 154.2L139.5 156.5L146.8 162.7L151.4 165.0M142.9 135.7L161.1 135.7M152.9 135.7L152.1 139.0M127.5 133.2L141.4 139.0M127.5 133.2L129.1 137.3L128.3 139.8L125.2 147.1L126.8 150.2L128.3 154.2L128.3 158.1L132.9 158.8L136.8 157.3L140.6 154.2M127.5 133.2L122.9 134.0L119.8 130.7L119.7 128.1L119.1 121.6L122.1 118.0L122.1 116.2M119.7 128.1L122.8 133.2L113.4 140.5L110.9 144.7L110.9 149.4L106.0 149.0L104.5 147.1M122.1 116.2L117.5 109.0M101.5 112.8L102.6 118.4L91.1 123.4L91.1 126.0L84.1 126.0M91.1 126.0L97.1 130.7L94.4 137.3L113.4 140.5M91.1 126.7L86.0 128.9L84.4 136.8L78.4 136.8M94.4 137.3L96.0 146.3L86.8 146.3L85.7 147.4L79.1 144.7M96.0 146.3L104.5 147.1L106.5 148.6L109.8 150.2L113.7 149.0L116.8 150.2L125.7 149.9L126.8 150.1M85.7 147.4L86.0 151.2L87.5 151.5L90.6 153.4L92.1 154.9L96.0 154.5L96.1 153.4L100.1 152.6L104.1 153.4L106.8 153.2L108.1 151.0L109.8 150.2M86.0 151.2L83.4 150.9L78.8 151.3M92.1 154.9L92.3 157.6L91.5 158.8L91.2 161.2L92.9 163.6M104.1 153.4L105.2 156.5L106.3 161.0M106.8 153.2L108.8 154.9L108.6 156.5L108.6 160.5M100.1 152.6L100.3 155.7L99.8 161.2L100.0 162.7M113.7 149.0L108.1 151.0M126.8 150.1L127.1 151.8L125.2 154.9L122.9 158.8L122.1 160.4L118.0 163.5M128.3 158.8L127.2 161.2L128.3 164.2L129.4 167.0L125.2 167.0L119.8 166.9M132.9 158.8L132.9 163.8L138.3 162.7L146.8 162.7M151.4 165.0L152.5 163.8L156.0 164.9L158.3 163.3L159.8 163.2L167.5 164.2M139.5 156.5L142.1 154.2L143.7 151.0L141.4 146.3M161.1 135.7L163.7 142.2L160.6 147.1L159.8 149.4L158.6 151.0L157.5 154.9L156.8 157.3L155.2 158.8L159.5 161.9L158.3 163.3M160.6 147.1L162.1 147.8L163.7 147.5L166.0 147.8L168.3 150.2L169.7 151.0M169.7 151.0L169.1 153.4L170.5 153.4M170.5 153.4L176.8 158.1L173.7 162.9L167.5 164.2L165.2 165.0L168.3 172.7M159.8 163.2L156.8 164.2L158.0 168.9L156.8 171.9L163.7 177.6M156.0 164.9L150.9 168.9L150.6 171.9L148.9 174.2L149.5 177.3L151.7 183.1M149.5 177.3L149.8 179.6L148.9 183.1L147.5 188.2L141.4 189.0L138.6 187.4L138.0 181.7L131.5 181.2L129.8 179.6L123.4 179.6M138.6 187.4L138.3 190.6L136.8 198.6L125.7 197.8M136.8 198.6L142.9 198.2L151.2 194.9L155.5 192.5L155.7 188.2L155.2 185.1L166.6 186.6M151.2 194.9L152.6 205.1L153.7 211.2M142.9 198.2L146.8 205.1L152.1 209.3M142.9 198.2L138.3 199.4L135.2 203.5L135.2 216.2M155.5 192.5L158.6 197.0L165.8 195.3M119.8 173.9L123.4 178.1L129.1 166.9L133.1 164.9M119.8 166.9L121.8 168.9L122.1 174.2M101.7 96.3L105.5 97.6L109.4 98.2M90.9 99.1L94.4 99.3L93.7 103.1L93.7 106.7L93.1 108.7M108.3 78.6L111.4 81.3L114.3 82.5L117.1 83.7L116.1 86.9L113.8 90.1L115.2 90.9L116.3 94.6M116.1 86.9L119.1 86.9L120.6 89.4L118.3 90.5L115.4 90.7M109.8 77.9L113.7 77.9L115.2 75.2L115.5 73.4M111.4 81.3L113.7 79.4L113.7 77.9M118.9 69.2L117.7 68.9M126.5 71.6L126.9 75.2L127.5 78.9L123.4 80.8L125.7 84.6L124.5 86.9L119.1 86.9M127.5 78.9L129.8 80.6L133.4 82.3L136.8 82.7L139.2 83.7M125.7 84.6L130.5 84.1L130.8 86.0L129.8 86.7L129.2 88.5L125.5 89.4L123.2 89.4L120.6 89.4M130.5 84.1L133.4 86.0L136.0 85.3L138.6 84.8L139.2 83.7M129.8 86.7L131.4 90.9L133.7 91.6L135.7 90.3L138.3 87.1L138.5 85.1M125.5 89.4L125.4 91.6L128.3 91.6L129.8 89.6L131.4 90.9M128.3 91.6L129.4 92.3L133.7 92.5L134.3 93.1L134.6 94.4L134.0 97.0L132.9 98.0M129.4 92.3L129.4 94.9L131.7 97.0L132.1 97.8M135.7 90.3L139.1 93.8L139.4 94.2L139.7 97.0L138.9 98.4L136.0 100.3L135.2 98.0L134.0 97.0M138.9 98.4L139.7 100.5L136.3 101.1L136.0 103.1L135.2 103.7M139.7 100.5L142.1 100.1L144.9 99.7L147.5 99.3M139.1 93.8L142.9 95.5L146.6 94.6L148.5 95.5M138.3 87.1L141.4 86.0L145.4 85.5L147.5 88.3L147.8 91.6L150.1 92.3M145.4 85.5L147.5 84.8L149.4 87.1L150.6 89.4M139.2 83.7L140.8 77.6L140.1 75.2L140.6 71.6L139.4 70.2L134.6 70.2M140.6 71.6L145.4 67.3L147.8 65.4L146.9 61.7L147.5 57.3L147.5 56.1M139.4 70.2L138.3 64.8L136.8 65.7M138.3 64.8L142.9 65.7L147.8 65.4M146.9 61.7L142.9 60.6L141.8 60.9M140.8 77.6L146.8 76.7L151.4 77.4L153.4 76.2L152.8 73.9L152.0 66.5L147.8 65.4M153.4 76.2L156.8 75.7L158.9 78.4L162.9 80.6L166.1 82.3L165.7 85.5L163.2 88.0M147.5 56.1L149.7 51.2L152.9 45.0L150.3 37.6L149.8 30.8L148.3 22.2L149.7 19.6M148.3 22.2L142.9 23.5L136.8 21.8L135.2 24.3L140.9 33.9L141.7 34.6M136.8 21.8L132.1 26.0L129.1 32.0L126.3 37.6L122.9 42.9L123.7 49.6L122.6 55.8L121.5 57.0M144.9 99.7L144.5 101.5M-5.6 92.7L-0.6 87.6L-2.0 87.1L0.1 90.7L1.1 92.5M12.1 157.3L10.6 159.6L11.4 162.7L6.0 164.2L6.0 168.9L1.4 168.1M11.4 162.7L13.7 168.4L18.3 167.3L16.0 164.5L16.6 161.3M18.3 167.3L20.6 166.9L21.4 161.6M20.6 166.9L23.1 167.0L25.1 163.9" fill="none" stroke="#b49ab8" stroke-width="0.55" stroke-opacity="0.75" stroke-linejoin="round"/>
<circle cx="219.2" cy="96.5" r="8" fill="#ffff00" fill-opacity="0.68"/>
<circle cx="219.2" cy="96.5" r="6.6" fill="#ffff00" fill-opacity="0.6"/>
<circle cx="212.5" cy="78.9" r="8" fill="#ff7e00" fill-opacity="0.68"/>
<circle cx="212.5" cy="78.9" r="6.6" fill="#ff7e00" fill-opacity="0.6"/>
<circle cx="268.9" cy="85.5" r="8" fill="#ff0000" fill-opacity="0.68"/>
<circle cx="268.9" cy="85.5" r="6.6" fill="#ff0000" fill-opacity="0.6"/>
<circle cx="132.8" cy="94.5" r="8" fill="#ff0000" fill-opacity="0.68"/>
<circle cx="132.8" cy="94.5" r="6.6" fill="#ff0000" fill-opacity="0.6"/>
<circle cx="222.8" cy="95.8" r="8" fill="#ff0000" fill-opacity="0.68"/>
<circle cx="222.8" cy="95.8" r="6.6" fill="#ff0000" fill-opacity="0.6"/>
<circle cx="137.0" cy="97.0" r="8" fill="#2ee000" fill-opacity="0.68"/>
<circle cx="137.0" cy="97.0" r="6.6" fill="#2ee000" fill-opacity="0.6"/>
<circle cx="294.3" cy="98.8" r="8" fill="#ff7e00" fill-opacity="0.68"/>
<circle cx="294.3" cy="98.8" r="6.6" fill="#ff7e00" fill-opacity="0.6"/>
<circle cx="211.0" cy="99.8" r="8" fill="#ff0000" fill-opacity="0.68"/>
<circle cx="211.0" cy="99.8" r="6.6" fill="#ff0000" fill-opacity="0.6"/>
<circle cx="283.5" cy="102.6" r="8" fill="#ffff00" fill-opacity="0.68"/>
<circle cx="283.5" cy="102.6" r="6.6" fill="#ffff00" fill-opacity="0.6"/>
<circle cx="210.3" cy="105.3" r="8" fill="#ff0000" fill-opacity="0.68"/>
<circle cx="210.3" cy="105.3" r="6.6" fill="#ff0000" fill-opacity="0.6"/>
<circle cx="194.3" cy="106.5" r="8" fill="#ff7e00" fill-opacity="0.68"/>
<circle cx="194.3" cy="106.5" r="6.6" fill="#ff7e00" fill-opacity="0.6"/>
<circle cx="109.2" cy="108.8" r="8" fill="#ffff00" fill-opacity="0.68"/>
<circle cx="109.2" cy="108.8" r="6.6" fill="#ffff00" fill-opacity="0.6"/>
<circle cx="210.9" cy="113.0" r="8" fill="#ff0000" fill-opacity="0.68"/>
<circle cx="210.9" cy="113.0" r="6.6" fill="#ff0000" fill-opacity="0.6"/>
<circle cx="216.8" cy="114.6" r="8" fill="#ff0000" fill-opacity="0.68"/>
<circle cx="216.8" cy="114.6" r="6.6" fill="#ff0000" fill-opacity="0.6"/>
<circle cx="172.8" cy="115.3" r="8" fill="#ff0000" fill-opacity="0.68"/>
<circle cx="172.8" cy="115.3" r="6.6" fill="#ff0000" fill-opacity="0.6"/>
<circle cx="159.7" cy="117.8" r="8" fill="#999999" fill-opacity="0.68"/>
<circle cx="159.7" cy="117.8" r="6.6" fill="#999999" fill-opacity="0.6"/>
<circle cx="218.8" cy="118.5" r="8" fill="#ff0000" fill-opacity="0.68"/>
<circle cx="218.8" cy="118.5" r="6.6" fill="#ff0000" fill-opacity="0.6"/>
<circle cx="291.4" cy="119.1" r="8" fill="#ff7e00" fill-opacity="0.68"/>
<circle cx="291.4" cy="119.1" r="6.6" fill="#ff7e00" fill-opacity="0.6"/>
<circle cx="178.3" cy="122.4" r="8" fill="#ff0000" fill-opacity="0.68"/>
<circle cx="178.3" cy="122.4" r="6.6" fill="#ff0000" fill-opacity="0.6"/>
<circle cx="223.2" cy="123.7" r="8" fill="#ff0000" fill-opacity="0.68"/>
<circle cx="223.2" cy="123.7" r="6.6" fill="#ff0000" fill-opacity="0.6"/>
<circle cx="235.7" cy="125.3" r="8" fill="#ff0000" fill-opacity="0.68"/>
<circle cx="235.7" cy="125.3" r="6.6" fill="#ff0000" fill-opacity="0.6"/>
<circle cx="176.3" cy="130.5" r="8" fill="#999999" fill-opacity="0.68"/>
<circle cx="176.3" cy="130.5" r="6.6" fill="#999999" fill-opacity="0.6"/>
<circle cx="181.5" cy="127.7" r="8" fill="#ffff00" fill-opacity="0.68"/>
<circle cx="181.5" cy="127.7" r="6.6" fill="#ffff00" fill-opacity="0.6"/>
<circle cx="207.5" cy="130.2" r="8" fill="#ff0000" fill-opacity="0.68"/>
<circle cx="207.5" cy="130.2" r="6.6" fill="#ff0000" fill-opacity="0.6"/>
<circle cx="188.1" cy="130.9" r="8" fill="#a6e22a" fill-opacity="0.68"/>
<circle cx="188.1" cy="130.9" r="6.6" fill="#a6e22a" fill-opacity="0.6"/>
<circle cx="243.5" cy="132.0" r="8" fill="#95177e" fill-opacity="0.68"/>
<circle cx="243.5" cy="132.0" r="6.6" fill="#95177e" fill-opacity="0.6"/>
<circle cx="278.8" cy="133.2" r="8" fill="#2ee000" fill-opacity="0.68"/>
<circle cx="278.8" cy="133.2" r="6.6" fill="#2ee000" fill-opacity="0.6"/>
<circle cx="240.4" cy="134.0" r="8" fill="#ff0000" fill-opacity="0.68"/>
<circle cx="240.4" cy="134.0" r="6.6" fill="#ff0000" fill-opacity="0.6"/>
<circle cx="164.8" cy="135.8" r="8" fill="#ff7e00" fill-opacity="0.68"/>
<circle cx="164.8" cy="135.8" r="6.6" fill="#ff7e00" fill-opacity="0.6"/>
<circle cx="267.3" cy="136.6" r="8" fill="#ffff00" fill-opacity="0.68"/>
<circle cx="267.3" cy="136.6" r="6.6" fill="#ffff00" fill-opacity="0.6"/>
<circle cx="216.6" cy="139.8" r="8" fill="#ff0000" fill-opacity="0.68"/>
<circle cx="216.6" cy="139.8" r="6.6" fill="#ff0000" fill-opacity="0.6"/>
<circle cx="225.2" cy="142.5" r="8" fill="#ff7e00" fill-opacity="0.68"/>
<circle cx="225.2" cy="142.5" r="6.6" fill="#ff7e00" fill-opacity="0.6"/>
<circle cx="252.5" cy="143.4" r="8" fill="#ff0000" fill-opacity="0.68"/>
<circle cx="252.5" cy="143.4" r="6.6" fill="#ff0000" fill-opacity="0.6"/>
<circle cx="262.3" cy="141.6" r="8" fill="#ffff00" fill-opacity="0.68"/>
<circle cx="262.3" cy="141.6" r="6.6" fill="#ffff00" fill-opacity="0.6"/>
<circle cx="154.5" cy="145.4" r="8" fill="#ffff00" fill-opacity="0.68"/>
<circle cx="154.5" cy="145.4" r="6.6" fill="#ffff00" fill-opacity="0.6"/>
<circle cx="228.0" cy="149.4" r="8" fill="#ffff00" fill-opacity="0.68"/>
<circle cx="228.0" cy="149.4" r="6.6" fill="#ffff00" fill-opacity="0.6"/>
<circle cx="127.6" cy="150.9" r="8" fill="#6a1a4e" fill-opacity="0.68"/>
<circle cx="127.6" cy="150.9" r="6.6" fill="#6a1a4e" fill-opacity="0.6"/>
<circle cx="268.6" cy="153.0" r="8" fill="#ff0000" fill-opacity="0.68"/>
<circle cx="268.6" cy="153.0" r="6.6" fill="#ff0000" fill-opacity="0.6"/>
<circle cx="1.5" cy="153.5" r="8" fill="#2ee000" fill-opacity="0.68"/>
<circle cx="1.5" cy="153.5" r="6.6" fill="#2ee000" fill-opacity="0.6"/>
<circle cx="83.4" cy="155.0" r="8" fill="#ffff00" fill-opacity="0.68"/>
<circle cx="83.4" cy="155.0" r="6.6" fill="#ffff00" fill-opacity="0.6"/>
<circle cx="92.1" cy="150.1" r="8" fill="#ff0000" fill-opacity="0.68"/>
<circle cx="92.1" cy="150.1" r="6.6" fill="#ff0000" fill-opacity="0.6"/>
<circle cx="164.1" cy="155.7" r="8" fill="#e4ec30" fill-opacity="0.68"/>
<circle cx="164.1" cy="155.7" r="6.6" fill="#e4ec30" fill-opacity="0.6"/>
<circle cx="227.3" cy="159.1" r="8" fill="#2ee000" fill-opacity="0.68"/>
<circle cx="227.3" cy="159.1" r="6.6" fill="#2ee000" fill-opacity="0.6"/>
<circle cx="109.7" cy="159.8" r="8" fill="#ffff00" fill-opacity="0.68"/>
<circle cx="109.7" cy="159.8" r="6.6" fill="#ffff00" fill-opacity="0.6"/>
<circle cx="104.2" cy="161.1" r="8" fill="#ffff00" fill-opacity="0.68"/>
<circle cx="104.2" cy="161.1" r="6.6" fill="#ffff00" fill-opacity="0.6"/>
<circle cx="98.2" cy="161.5" r="8" fill="#ffff00" fill-opacity="0.68"/>
<circle cx="98.2" cy="161.5" r="6.6" fill="#ffff00" fill-opacity="0.6"/>
<circle cx="154.6" cy="169.2" r="8" fill="#999999" fill-opacity="0.68"/>
<circle cx="154.6" cy="169.2" r="6.6" fill="#999999" fill-opacity="0.6"/>
<circle cx="268.8" cy="179.3" r="8" fill="#a6e22a" fill-opacity="0.68"/>
<circle cx="268.8" cy="179.3" r="6.6" fill="#a6e22a" fill-opacity="0.6"/>
<circle cx="177.5" cy="199.3" r="8" fill="#ffff00" fill-opacity="0.68"/>
<circle cx="177.5" cy="199.3" r="6.6" fill="#ffff00" fill-opacity="0.6"/>
<text x="219.2" y="98.8" font-size="6.5" font-weight="bold" text-anchor="middle" fill="#333" stroke="#fff" stroke-width="2" stroke-opacity="0.75" paint-order="stroke">72</text>
<text x="212.5" y="81.2" font-size="6.5" font-weight="bold" text-anchor="middle" fill="#333" stroke="#fff" stroke-width="2" stroke-opacity="0.75" paint-order="stroke">104</text>
<text x="268.9" y="87.8" font-size="6.5" font-weight="bold" text-anchor="middle" fill="#333" stroke="#fff" stroke-width="2" stroke-opacity="0.75" paint-order="stroke">152</text>
<text x="132.8" y="96.8" font-size="6.5" font-weight="bold" text-anchor="middle" fill="#333" stroke="#fff" stroke-width="2" stroke-opacity="0.75" paint-order="stroke">160</text>
<text x="222.8" y="98.1" font-size="6.5" font-weight="bold" text-anchor="middle" fill="#333" stroke="#fff" stroke-width="2" stroke-opacity="0.75" paint-order="stroke">167</text>
<text x="137.0" y="99.3" font-size="6.5" font-weight="bold" text-anchor="middle" fill="#333" stroke="#fff" stroke-width="2" stroke-opacity="0.75" paint-order="stroke">50</text>
<text x="294.3" y="101.1" font-size="6.5" font-weight="bold" text-anchor="middle" fill="#333" stroke="#fff" stroke-width="2" stroke-opacity="0.75" paint-order="stroke">105</text>
<text x="211.0" y="102.1" font-size="6.5" font-weight="bold" text-anchor="middle" fill="#333" stroke="#fff" stroke-width="2" stroke-opacity="0.75" paint-order="stroke">176</text>
<text x="283.5" y="104.9" font-size="6.5" font-weight="bold" text-anchor="middle" fill="#333" stroke="#fff" stroke-width="2" stroke-opacity="0.75" paint-order="stroke">55</text>
<text x="210.3" y="107.6" font-size="6.5" font-weight="bold" text-anchor="middle" fill="#333" stroke="#fff" stroke-width="2" stroke-opacity="0.75" paint-order="stroke">158</text>
<text x="194.3" y="108.8" font-size="6.5" font-weight="bold" text-anchor="middle" fill="#333" stroke="#fff" stroke-width="2" stroke-opacity="0.75" paint-order="stroke">127</text>
<text x="109.2" y="111.1" font-size="6.5" font-weight="bold" text-anchor="middle" fill="#333" stroke="#fff" stroke-width="2" stroke-opacity="0.75" paint-order="stroke">68</text>
<text x="210.9" y="115.3" font-size="6.5" font-weight="bold" text-anchor="middle" fill="#333" stroke="#fff" stroke-width="2" stroke-opacity="0.75" paint-order="stroke">11</text>
<text x="216.8" y="116.9" font-size="6.5" font-weight="bold" text-anchor="middle" fill="#333" stroke="#fff" stroke-width="2" stroke-opacity="0.75" paint-order="stroke">157</text>
<text x="172.8" y="117.6" font-size="6.5" font-weight="bold" text-anchor="middle" fill="#333" stroke="#fff" stroke-width="2" stroke-opacity="0.75" paint-order="stroke">171</text>
<text x="159.7" y="120.1" font-size="6.5" font-weight="bold" text-anchor="middle" fill="#333" stroke="#fff" stroke-width="2" stroke-opacity="0.75" paint-order="stroke">N/A</text>
<text x="218.8" y="120.8" font-size="6.5" font-weight="bold" text-anchor="middle" fill="#333" stroke="#fff" stroke-width="2" stroke-opacity="0.75" paint-order="stroke">176</text>
<text x="291.4" y="121.4" font-size="6.5" font-weight="bold" text-anchor="middle" fill="#333" stroke="#fff" stroke-width="2" stroke-opacity="0.75" paint-order="stroke">116</text>
<text x="178.3" y="124.7" font-size="6.5" font-weight="bold" text-anchor="middle" fill="#333" stroke="#fff" stroke-width="2" stroke-opacity="0.75" paint-order="stroke">160</text>
<text x="223.2" y="126.0" font-size="6.5" font-weight="bold" text-anchor="middle" fill="#333" stroke="#fff" stroke-width="2" stroke-opacity="0.75" paint-order="stroke">155</text>
<text x="235.7" y="127.6" font-size="6.5" font-weight="bold" text-anchor="middle" fill="#333" stroke="#fff" stroke-width="2" stroke-opacity="0.75" paint-order="stroke">162</text>
<text x="176.3" y="132.8" font-size="6.5" font-weight="bold" text-anchor="middle" fill="#333" stroke="#fff" stroke-width="2" stroke-opacity="0.75" paint-order="stroke">N/A</text>
<text x="181.5" y="130.0" font-size="6.5" font-weight="bold" text-anchor="middle" fill="#333" stroke="#fff" stroke-width="2" stroke-opacity="0.75" paint-order="stroke">95</text>
<text x="207.5" y="132.5" font-size="6.5" font-weight="bold" text-anchor="middle" fill="#333" stroke="#fff" stroke-width="2" stroke-opacity="0.75" paint-order="stroke">153</text>
<text x="188.1" y="133.2" font-size="6.5" font-weight="bold" text-anchor="middle" fill="#333" stroke="#fff" stroke-width="2" stroke-opacity="0.75" paint-order="stroke">51</text>
<text x="278.8" y="135.5" font-size="6.5" font-weight="bold" text-anchor="middle" fill="#333" stroke="#fff" stroke-width="2" stroke-opacity="0.75" paint-order="stroke">47</text>
<text x="240.4" y="136.3" font-size="6.5" font-weight="bold" text-anchor="middle" fill="#333" stroke="#fff" stroke-width="2" stroke-opacity="0.75" paint-order="stroke">170</text>
<text x="164.8" y="138.1" font-size="6.5" font-weight="bold" text-anchor="middle" fill="#333" stroke="#fff" stroke-width="2" stroke-opacity="0.75" paint-order="stroke">136</text>
<text x="267.3" y="138.9" font-size="6.5" font-weight="bold" text-anchor="middle" fill="#333" stroke="#fff" stroke-width="2" stroke-opacity="0.75" paint-order="stroke">91</text>
<text x="216.6" y="142.1" font-size="6.5" font-weight="bold" text-anchor="middle" fill="#333" stroke="#fff" stroke-width="2" stroke-opacity="0.75" paint-order="stroke">187</text>
<text x="225.2" y="144.8" font-size="6.5" font-weight="bold" text-anchor="middle" fill="#333" stroke="#fff" stroke-width="2" stroke-opacity="0.75" paint-order="stroke">108</text>
<text x="252.5" y="145.7" font-size="6.5" font-weight="bold" text-anchor="middle" fill="#333" stroke="#fff" stroke-width="2" stroke-opacity="0.75" paint-order="stroke">156</text>
<text x="262.3" y="143.9" font-size="6.5" font-weight="bold" text-anchor="middle" fill="#333" stroke="#fff" stroke-width="2" stroke-opacity="0.75" paint-order="stroke">52</text>
<text x="154.5" y="147.7" font-size="6.5" font-weight="bold" text-anchor="middle" fill="#333" stroke="#fff" stroke-width="2" stroke-opacity="0.75" paint-order="stroke">80</text>
<text x="228.0" y="151.7" font-size="6.5" font-weight="bold" text-anchor="middle" fill="#333" stroke="#fff" stroke-width="2" stroke-opacity="0.75" paint-order="stroke">97</text>
<text x="127.6" y="153.2" font-size="6.5" font-weight="bold" text-anchor="middle" fill="#333" stroke="#fff" stroke-width="2" stroke-opacity="0.75" paint-order="stroke">422</text>
<text x="268.6" y="155.3" font-size="6.5" font-weight="bold" text-anchor="middle" fill="#333" stroke="#fff" stroke-width="2" stroke-opacity="0.75" paint-order="stroke">151</text>
<text x="1.5" y="155.8" font-size="6.5" font-weight="bold" text-anchor="middle" fill="#333" stroke="#fff" stroke-width="2" stroke-opacity="0.75" paint-order="stroke">43</text>
<text x="83.4" y="157.3" font-size="6.5" font-weight="bold" text-anchor="middle" fill="#333" stroke="#fff" stroke-width="2" stroke-opacity="0.75" paint-order="stroke">52</text>
<text x="92.1" y="152.4" font-size="6.5" font-weight="bold" text-anchor="middle" fill="#333" stroke="#fff" stroke-width="2" stroke-opacity="0.75" paint-order="stroke">156</text>
<text x="164.1" y="158.0" font-size="6.5" font-weight="bold" text-anchor="middle" fill="#333" stroke="#fff" stroke-width="2" stroke-opacity="0.75" paint-order="stroke">169</text>
<text x="227.3" y="161.4" font-size="6.5" font-weight="bold" text-anchor="middle" fill="#333" stroke="#fff" stroke-width="2" stroke-opacity="0.75" paint-order="stroke">46</text>
<text x="109.7" y="162.1" font-size="6.5" font-weight="bold" text-anchor="middle" fill="#333" stroke="#fff" stroke-width="2" stroke-opacity="0.75" paint-order="stroke">50</text>
<text x="104.2" y="163.4" font-size="6.5" font-weight="bold" text-anchor="middle" fill="#333" stroke="#fff" stroke-width="2" stroke-opacity="0.75" paint-order="stroke">5</text>
<text x="98.2" y="163.8" font-size="6.5" font-weight="bold" text-anchor="middle" fill="#333" stroke="#fff" stroke-width="2" stroke-opacity="0.75" paint-order="stroke">76</text>
<text x="154.6" y="171.5" font-size="6.5" font-weight="bold" text-anchor="middle" fill="#333" stroke="#fff" stroke-width="2" stroke-opacity="0.75" paint-order="stroke">N/A</text>
<text x="268.8" y="181.6" font-size="6.5" font-weight="bold" text-anchor="middle" fill="#333" stroke="#fff" stroke-width="2" stroke-opacity="0.75" paint-order="stroke">51</text>
<text x="177.5" y="201.6" font-size="6.5" font-weight="bold" text-anchor="middle" fill="#333" stroke="#fff" stroke-width="2" stroke-opacity="0.75" paint-order="stroke">76</text>
<text x="243.5" y="134.3" font-size="6.5" font-weight="bold" text-anchor="middle" fill="#333" stroke="#fff" stroke-width="2" stroke-opacity="0.75" paint-order="stroke">276</text>
<g transform="translate(-14 -32)">
 <path d="M210.5 43.6 H288.5 Q293 43.6 293 48.1 V111.5 Q293 116 288.5 116 H238 L232.5 121.8 L227 116 H210.5 Q206 116 206 111.5 V48.1 Q206 43.6 210.5 43.6Z" fill="none" stroke="rgba(0,0,0,0.07)" stroke-width="2.2"/>
 <path d="M210.5 43.6 H288.5 Q293 43.6 293 48.1 V111.5 Q293 116 288.5 116 H238 L232.5 121.8 L227 116 H210.5 Q206 116 206 111.5 V48.1 Q206 43.6 210.5 43.6Z" fill="#fff" stroke="rgba(0,0,0,0.1)" stroke-width="0.6"/>
 <text x="249.5" y="58.3" font-size="7.4" text-anchor="middle" fill="#333">Bishkek</text>
 <text x="249.5" y="66.8" font-size="7.5" text-anchor="middle" fill="#333">2021-01-09 9:00 AM</text>
 <text x="249.5" y="74.8" font-size="7.4" text-anchor="middle" fill="#333">(LT)</text>
 <rect x="214.5" y="76.5" width="70" height="30.5" fill="#fff" stroke="#03467f" stroke-width="1"/>
 <rect x="214.5" y="76.5" width="70" height="15" fill="#03467f"/>
 <rect x="259.5" y="91.5" width="25" height="15.5" fill="#ffff00" stroke="#03467f" stroke-width="1"/>
 <text x="237" y="86.5" font-size="7.5" font-weight="bold" text-anchor="middle" fill="#fff">Pollutant</text>
 <text x="272" y="86.5" font-size="7.5" font-weight="bold" text-anchor="middle" fill="#fff">AQI</text>
 <text x="237" y="101.8" font-size="7.4" text-anchor="middle" fill="#333">PM2.5</text>
 <text x="272" y="101.8" font-size="7.4" text-anchor="middle" fill="#333">72</text>
</g>
</svg></div>

<div class="abs ph" style="top:1px">Select a City</div>
<div class="abs sel" style="top:21px">Bishkek<span class="x">×</span><span class="c"></span></div>
<div class="abs ph" style="top:52px">Select a Parameter</div>
<div class="abs sel" style="top:71.5px">PM2.5<span class="x">×</span><span class="c"></span></div>
<div id="rss" class="abs"><div class="n">Bishkek</div>
 <svg class="abs" style="left:154.5px;top:14px" width="18.5" height="18.5" viewBox="0 0 19 18" preserveAspectRatio="none"><rect width="19" height="18" fill="#f0b43c"/>
 <circle cx="4.5" cy="14" r="2" fill="#fff"/>
 <path d="M3 8 A7 7 0 0 1 10 15" stroke="#fff" stroke-width="2.2" fill="none"/>
 <path d="M3 3.5 A11.5 11.5 0 0 1 14.5 15" stroke="#fff" stroke-width="2.2" fill="none"/></svg>
</div>
<div id="note" class="abs">Note: Values above 500 are considered Beyond the AQI. Follow<br>recommendations for the Hazardous category. Additional information<br>on reducing exposure to extremely high levels of particle pollution is<br>available <b style="text-decoration:underline;color:#123">here</b>.</div>

<div class="abs tab" style="left:14px;width:58px;height:16.5px;background:#fff;border:1px solid #c6c6c6;border-bottom:0;border-top:2px solid #0a4c85;color:#333;padding-top:4px">AQI</div>
<div class="abs tab" style="left:73px;width:89px">Concentration</div>
<div class="abs tab" style="left:164px;width:75px">Historical</div>
<div class="abs" style="left:14px;top:268px;width:574px;height:1px;background:#c6c6c6"></div>
<div id="learn" class="abs">Learn more about how the Air Quality Index [AQI] is calculated from the EPA <b style="text-decoration:underline;color:#123">here</b>.</div>

<div id="chart" class="abs"><svg class="abs" style="left:0;top:0" width="430" height="204" viewBox="14 296 430 204">
<text x="46.5" y="429.2" font-size="6" text-anchor="end" fill="#444">0</text>
<rect x="54" y="408.5" width="385" height="1" fill="#e6e6e6"/>
<text x="46.5" y="411.2" font-size="6" text-anchor="end" fill="#444">100</text>
<rect x="54" y="390.5" width="385" height="1" fill="#e6e6e6"/>
<text x="46.5" y="393.2" font-size="6" text-anchor="end" fill="#444">200</text>
<rect x="54" y="372.5" width="385" height="1" fill="#e6e6e6"/>
<text x="46.5" y="375.2" font-size="6" text-anchor="end" fill="#444">300</text>
<rect x="54" y="354.5" width="385" height="1" fill="#e6e6e6"/>
<text x="46.5" y="357.2" font-size="6" text-anchor="end" fill="#444">400</text>
<rect x="54" y="336.5" width="385" height="1" fill="#e6e6e6"/>
<text x="46.5" y="339.2" font-size="6" text-anchor="end" fill="#444">500</text>
<rect x="54" y="427" width="385" height="1" fill="#d8d8d8"/>
<rect x="53.5" y="427" width="1" height="4" fill="#d8d8d8"/>
<rect x="69.5" y="427" width="1" height="4" fill="#d8d8d8"/>
<rect x="85.6" y="427" width="1" height="4" fill="#d8d8d8"/>
<rect x="101.6" y="427" width="1" height="4" fill="#d8d8d8"/>
<rect x="117.7" y="427" width="1" height="4" fill="#d8d8d8"/>
<rect x="133.7" y="427" width="1" height="4" fill="#d8d8d8"/>
<rect x="149.7" y="427" width="1" height="4" fill="#d8d8d8"/>
<rect x="165.8" y="427" width="1" height="4" fill="#d8d8d8"/>
<rect x="181.8" y="427" width="1" height="4" fill="#d8d8d8"/>
<rect x="197.9" y="427" width="1" height="4" fill="#d8d8d8"/>
<rect x="213.9" y="427" width="1" height="4" fill="#d8d8d8"/>
<rect x="229.9" y="427" width="1" height="4" fill="#d8d8d8"/>
<rect x="246.0" y="427" width="1" height="4" fill="#d8d8d8"/>
<rect x="262.0" y="427" width="1" height="4" fill="#d8d8d8"/>
<rect x="278.1" y="427" width="1" height="4" fill="#d8d8d8"/>
<rect x="294.1" y="427" width="1" height="4" fill="#d8d8d8"/>
<rect x="310.1" y="427" width="1" height="4" fill="#d8d8d8"/>
<rect x="326.2" y="427" width="1" height="4" fill="#d8d8d8"/>
<rect x="342.2" y="427" width="1" height="4" fill="#d8d8d8"/>
<rect x="358.3" y="427" width="1" height="4" fill="#d8d8d8"/>
<rect x="374.3" y="427" width="1" height="4" fill="#d8d8d8"/>
<rect x="390.3" y="427" width="1" height="4" fill="#d8d8d8"/>
<rect x="406.4" y="427" width="1" height="4" fill="#d8d8d8"/>
<rect x="422.4" y="427" width="1" height="4" fill="#d8d8d8"/>
<rect x="438.5" y="427" width="1" height="4" fill="#d8d8d8"/>
<rect x="58.50" y="399.1" width="8" height="27.9" fill="#ff0000" stroke="#333" stroke-opacity="0.55" stroke-width="1"/>
<text transform="translate(63.8 435.5) rotate(-45)" font-size="6.6" text-anchor="end" fill="#777">10 AM</text>
<rect x="74.52" y="399.8" width="8" height="27.2" fill="#ff0000" stroke="#333" stroke-opacity="0.55" stroke-width="1"/>
<text transform="translate(79.8 435.5) rotate(-45)" font-size="6.6" text-anchor="end" fill="#777">11 AM</text>
<rect x="90.54" y="400.3" width="8" height="26.7" fill="#ff0000" stroke="#333" stroke-opacity="0.55" stroke-width="1"/>
<text transform="translate(95.8 435.5) rotate(-45)" font-size="6.6" text-anchor="end" fill="#777">12 PM</text>
<rect x="106.56" y="408.1" width="8" height="18.9" fill="#ff7e00" stroke="#333" stroke-opacity="0.55" stroke-width="1"/>
<text transform="translate(111.9 435.5) rotate(-45)" font-size="6.6" text-anchor="end" fill="#777">1 PM</text>
<rect x="122.58" y="399.8" width="8" height="27.2" fill="#ff0000" stroke="#333" stroke-opacity="0.55" stroke-width="1"/>
<text transform="translate(127.9 435.5) rotate(-45)" font-size="6.6" text-anchor="end" fill="#777">2 PM</text>
<rect x="138.60" y="364.7" width="8" height="62.3" fill="#4c0026" stroke="#333" stroke-opacity="0.55" stroke-width="1"/>
<text transform="translate(143.9 435.5) rotate(-45)" font-size="6.6" text-anchor="end" fill="#777">3 PM</text>
<rect x="154.62" y="338.2" width="8" height="88.8" fill="#4c0026" stroke="#333" stroke-opacity="0.55" stroke-width="1"/>
<text transform="translate(159.9 435.5) rotate(-45)" font-size="6.6" text-anchor="end" fill="#777">4 PM</text>
<rect x="170.64" y="329.2" width="8" height="97.8" fill="#4c0026" stroke="#333" stroke-opacity="0.55" stroke-width="1"/>
<text transform="translate(175.9 435.5) rotate(-45)" font-size="6.6" text-anchor="end" fill="#777">5 PM</text>
<rect x="186.66" y="342.2" width="8" height="84.8" fill="#4c0026" stroke="#333" stroke-opacity="0.55" stroke-width="1"/>
<text transform="translate(192.0 435.5) rotate(-45)" font-size="6.6" text-anchor="end" fill="#777">6 PM</text>
<rect x="202.68" y="358.7" width="8" height="68.3" fill="#4c0026" stroke="#333" stroke-opacity="0.55" stroke-width="1"/>
<text transform="translate(208.0 435.5) rotate(-45)" font-size="6.6" text-anchor="end" fill="#777">7 PM</text>
<rect x="218.70" y="360.7" width="8" height="66.3" fill="#4c0026" stroke="#333" stroke-opacity="0.55" stroke-width="1"/>
<text transform="translate(224.0 435.5) rotate(-45)" font-size="6.6" text-anchor="end" fill="#777">8 PM</text>
<rect x="234.72" y="360.7" width="8" height="66.3" fill="#4c0026" stroke="#333" stroke-opacity="0.55" stroke-width="1"/>
<text transform="translate(240.0 435.5) rotate(-45)" font-size="6.6" text-anchor="end" fill="#777">9 PM</text>
<rect x="250.74" y="371.2" width="8" height="55.8" fill="#4c0026" stroke="#333" stroke-opacity="0.55" stroke-width="1"/>
<text transform="translate(256.0 435.5) rotate(-45)" font-size="6.6" text-anchor="end" fill="#777">10 PM</text>
<rect x="266.76" y="380.3" width="8" height="46.7" fill="#99004c" stroke="#333" stroke-opacity="0.55" stroke-width="1"/>
<text transform="translate(272.1 435.5) rotate(-45)" font-size="6.6" text-anchor="end" fill="#777">11 PM</text>
<rect x="282.78" y="374.0" width="8" height="53.0" fill="#99004c" stroke="#333" stroke-opacity="0.55" stroke-width="1"/>
<text transform="translate(288.1 435.5) rotate(-45)" font-size="6.6" text-anchor="end" fill="#777">Jan 09, 2021 12 AM</text>
<rect x="298.80" y="384.3" width="8" height="42.7" fill="#99004c" stroke="#333" stroke-opacity="0.55" stroke-width="1"/>
<text transform="translate(304.1 435.5) rotate(-45)" font-size="6.6" text-anchor="end" fill="#777">1 AM</text>
<rect x="314.82" y="392.8" width="8" height="34.2" fill="#ff0000" stroke="#333" stroke-opacity="0.55" stroke-width="1"/>
<text transform="translate(320.1 435.5) rotate(-45)" font-size="6.6" text-anchor="end" fill="#777">2 AM</text>
<rect x="330.84" y="395.1" width="8" height="31.9" fill="#ff0000" stroke="#333" stroke-opacity="0.55" stroke-width="1"/>
<text transform="translate(336.1 435.5) rotate(-45)" font-size="6.6" text-anchor="end" fill="#777">3 AM</text>
<rect x="346.86" y="395.1" width="8" height="31.9" fill="#ff0000" stroke="#333" stroke-opacity="0.55" stroke-width="1"/>
<text transform="translate(352.2 435.5) rotate(-45)" font-size="6.6" text-anchor="end" fill="#777">4 AM</text>
<rect x="362.88" y="393.8" width="8" height="33.2" fill="#ff0000" stroke="#333" stroke-opacity="0.55" stroke-width="1"/>
<text transform="translate(368.2 435.5) rotate(-45)" font-size="6.6" text-anchor="end" fill="#777">5 AM</text>
<rect x="378.90" y="399.1" width="8" height="27.9" fill="#ff0000" stroke="#333" stroke-opacity="0.55" stroke-width="1"/>
<text transform="translate(384.2 435.5) rotate(-45)" font-size="6.6" text-anchor="end" fill="#777">6 AM</text>
<rect x="394.92" y="407.5" width="8" height="19.5" fill="#ff7e00" stroke="#333" stroke-opacity="0.55" stroke-width="1"/>
<text transform="translate(400.2 435.5) rotate(-45)" font-size="6.6" text-anchor="end" fill="#777">7 AM</text>
<rect x="410.94" y="409.0" width="8" height="18.0" fill="#ff7e00" stroke="#333" stroke-opacity="0.55" stroke-width="1"/>
<text transform="translate(416.2 435.5) rotate(-45)" font-size="6.6" text-anchor="end" fill="#777">8 AM</text>
<rect x="426.96" y="414.5" width="8" height="12.5" fill="#ffff00" stroke="#333" stroke-opacity="0.55" stroke-width="1"/>
<text transform="translate(432.3 435.5) rotate(-45)" font-size="6.6" text-anchor="end" fill="#777">9 AM</text>
<text transform="translate(30 376) rotate(-90)" font-size="6.5" text-anchor="middle" fill="#666">AQI</text>
<text x="229" y="309" font-size="9.6" letter-spacing="0.25" text-anchor="middle" fill="#333">Bishkek - PM2.5</text>
<rect x="217" y="489" width="8" height="7" fill="#ccc"/>
<text x="228" y="495" font-size="7" font-weight="bold" fill="#333">AQI</text>
</svg></div>
<div id="cc" class="abs">
 <div class="abs" style="left:0;top:0;width:133px;height:39px;background:#03467f;color:#fff;font-weight:bold;text-align:center">
  <div class="abs" style="left:0;width:133px;top:2.6px;font-size:8.1px">Current Conditions</div>
  <div class="abs" style="left:0;width:133px;top:15.5px;font-size:6.7px">observed at</div>
  <div class="abs" style="left:0;width:133px;top:25.5px;font-size:8.1px">Jan 9, 2021 9:00 AM (LT)</div>
 </div>
 <div class="abs" style="left:0;top:39px;width:133px;height:62px;background:#ffff00;color:#111;font-weight:bold;text-align:center;font-size:10.7px">
  <div class="abs" style="left:0;width:133px;top:10px">72 AQI</div>
  <div class="abs" style="left:0;width:133px;top:25px">Moderate</div>
  <div class="abs" style="left:0;width:133px;top:40px">PM2.5</div>
 </div>
 <div class="abs" style="left:0;width:133px;top:107px;font-size:6.5px;font-weight:bold;text-align:center;color:#333">Health Message</div>
 <div class="abs" style="left:2.4px;width:130.5px;top:118.2px;font-size:6.5px;line-height:11.23px;color:#555;white-space:nowrap">The AQI is between 51 and 100. Air quality is<br>acceptable; however, pollution in this range<br>may pose a moderate health concern for a<br>very small number of individuals. People<br>who are unusually sensitive to ozone or<br>particle pollution may experience respiratory<br>symptoms.</div>
</div>
</body></html>
